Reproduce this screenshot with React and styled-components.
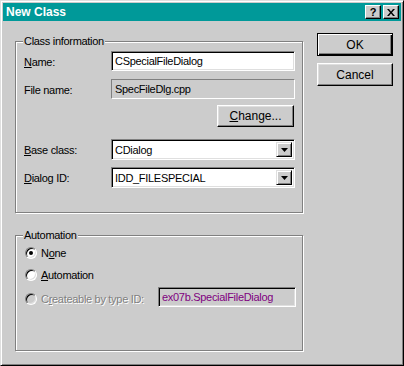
import React from 'react';
import styled, { createGlobalStyle } from 'styled-components';

const Global = createGlobalStyle`
  html, body { margin: 0; padding: 0; background: #cccccc; }
  * { box-sizing: border-box; }
`;

const Window = styled.div`
  width: 404px;
  height: 366px;
  background: #cccccc;
  border: 1px solid;
  border-color: #dfdfdf #000 #000 #dfdfdf;
  box-shadow: inset 1px 1px #fff, inset -1px -1px #808080;
  padding: 2px;
  display: flex;
  flex-direction: column;
  font-family: "Liberation Sans", Arial, sans-serif;
  font-size: 11px;
  letter-spacing: -0.3px;
  color: #000;
`;

const TitleBar = styled.div`
  height: 18px;
  background: #009999;
  display: flex;
  align-items: center;
  padding: 0 2px 0 3px;
`;

const Title = styled.div`
  flex: 1;
  color: #fff;
  font-weight: bold;
  font-size: 12px;
  letter-spacing: 0;
`;

const CapButton = styled.div`
  width: 16px;
  height: 14px;
  margin-left: ${p => p.gap || 0}px;
  background: #cccccc;
  border: 1px solid;
  border-color: #fff #000 #000 #fff;
  box-shadow: inset -1px -1px #808080;
  display: flex;
  align-items: center;
  justify-content: center;
  font-weight: bold;
  font-size: 11px;
  line-height: 1;
`;

const Body = styled.div`
  flex: 1;
  display: flex;
  gap: 14px;
  padding: 12px 8px 0 12px;
`;

const LeftCol = styled.div`
  width: 288px;
  padding-top: 8px;
  display: flex;
  flex-direction: column;
`;

const RightCol = styled.div`
  width: 76px;
  display: flex;
  flex-direction: column;
  gap: 7px;
`;

const Group = styled.div`
  position: relative;
  height: ${p => p.h}px;
  margin-top: ${p => p.mt || 0}px;
  border: 1px solid #808080;
  box-shadow: inset 1px 1px #fff, 1px 1px #fff;
  padding: ${p => p.pad};
  display: flex;
  flex-direction: column;
`;

const Legend = styled.span`
  position: absolute;
  top: -7px;
  left: 7px;
  padding: 0 1px;
  background: #cccccc;
  line-height: 13px;
`;

const FormRow = styled.div`
  display: grid;
  grid-template-columns: 87px 184px;
  align-items: center;
  height: ${p => p.h || 20}px;
  margin-top: ${p => p.mt || 0}px;
`;

const Label = styled.span`
  padding-top: 1px;
`;

const TextBox = styled.div`
  height: 100%;
  display: flex;
  align-items: center;
  padding-left: 3px;
  background: ${p => (p.readOnly ? '#cccccc' : '#fff')};
  border: 1px solid;
  border-color: #808080 #fff #fff #808080;
  box-shadow: ${p => (p.readOnly ? 'none' : 'inset 1px 1px #000, inset -1px -1px #dfdfdf')};
  color: ${p => p.color || '#000'};
  white-space: nowrap;
`;

const Combo = styled.div`
  height: 100%;
  display: flex;
  align-items: stretch;
  background: #fff;
  border: 1px solid;
  border-color: #808080 #fff #fff #808080;
  box-shadow: inset 1px 1px #000, inset -1px -1px #dfdfdf;
  padding: 2px 2px 2px 1px;
`;

const ComboText = styled.span`
  flex: 1;
  display: flex;
  align-items: center;
  padding-left: 2px;
`;

const DropButton = styled.div`
  width: 16px;
  background: #cccccc;
  border: 1px solid;
  border-color: #dfdfdf #000 #000 #dfdfdf;
  box-shadow: inset 1px 1px #fff, inset -1px -1px #808080;
  display: flex;
  align-items: center;
  justify-content: center;
`;

const Button = styled.div`
  width: ${p => p.w || 76}px;
  height: ${p => p.h || 23}px;
  background: #cccccc;
  border: 1px solid;
  border-color: ${p => (p.isDefault ? '#000' : '#fff #000 #000 #fff')};
  box-shadow: ${p =>
    p.isDefault
      ? 'inset 1px 1px #fff, inset -1px -1px #000, inset -2px -2px #808080'
      : 'inset -1px -1px #808080, inset 1px 1px #dfdfdf'};
  display: flex;
  align-items: center;
  justify-content: center;
  font-size: 12px;
  letter-spacing: 0;
`;

const ButtonRow = styled.div`
  display: flex;
  justify-content: flex-end;
  margin-top: ${p => p.mt || 0}px;
  padding-right: 1px;
`;

const RadioRow = styled.div`
  display: flex;
  align-items: center;
  height: 20px;
  margin-top: ${p => p.mt || 0}px;
  gap: 4px;
`;

const Radio = styled.span`
  position: relative;
  width: 12px;
  height: 12px;
  border-radius: 50%;
  border: 1px solid;
  border-color: #808080 #fff #fff #808080;
  box-shadow: inset 1px 1px #000, inset -1px -1px #dfdfdf;
  background: ${p => (p.disabled ? '#cccccc' : '#fff')};
  margin-top: ${p => p.shift || 0}px;

  &::after {
    content: '';
    display: ${p => (p.checked ? 'block' : 'none')};
    position: absolute;
    left: 3px;
    top: 3px;
    width: 4px;
    height: 4px;
    border-radius: 50%;
    background: #000;
  }
`;

const RadioText = styled.span`
  color: ${p => (p.disabled ? '#808080' : '#000')};
  text-shadow: ${p => (p.disabled ? '1px 1px #fff' : 'none')};
  margin-top: ${p => p.shift || 0}px;
`;

const IdField = styled(TextBox)`
  margin-left: auto;
  width: 138px;
  height: 20px;
  box-shadow: inset 1px 1px #000, inset -1px -1px #dfdfdf;
`;

const Arrow = () => (
  <svg width="7" height="4" viewBox="0 0 7 4">
    <polygon points="0,0 7,0 3.5,4" fill="#000" />
  </svg>
);

const CloseGlyph = () => (
  <svg width="8" height="7" viewBox="0 0 8 7">
    <path d="M0 0h2l2 2.5L6 0h2L5 3.5 8 7H6L4 4.5 2 7H0l3-3.5z" fill="#000" />
  </svg>
);

const Key = ({ children }) => <u>{children}</u>;

export default function App() {
  return (
    <>
      <Global />
      <Window>
        <TitleBar>
          <Title>New Class</Title>
          <CapButton>?</CapButton>
          <CapButton gap={2}><CloseGlyph /></CapButton>
        </TitleBar>
        <Body>
          <LeftCol>
            <Group h={172} pad="9px 7px 0 8px">
              <Legend>Class information</Legend>
              <FormRow>
                <Label><Key>N</Key>ame:</Label>
                <TextBox>CSpecialFileDialog</TextBox>
              </FormRow>
              <FormRow mt={8}>
                <Label>File name:</Label>
                <TextBox readOnly>SpecFileDlg.cpp</TextBox>
              </FormRow>
              <ButtonRow mt={6}>
                <Button w={77} h={22}><span><Key>C</Key>hange...</span></Button>
              </ButtonRow>
              <FormRow mt={12} h={21}>
                <Label><Key>B</Key>ase class:</Label>
                <Combo>
                  <ComboText>CDialog</ComboText>
                  <DropButton><Arrow /></DropButton>
                </Combo>
              </FormRow>
              <FormRow mt={7} h={21}>
                <Label><Key>D</Key>ialog ID:</Label>
                <Combo>
                  <ComboText>IDD_FILESPECIAL</ComboText>
                  <DropButton><Arrow /></DropButton>
                </Combo>
              </FormRow>
            </Group>
            <Group h={116} mt={22} pad="7px 6px 0 9px">
              <Legend>Automation</Legend>
              <RadioRow>
                <Radio checked />
                <RadioText>N<Key>o</Key>ne</RadioText>
              </RadioRow>
              <RadioRow mt={2}>
                <Radio />
                <RadioText><Key>A</Key>utomation</RadioText>
              </RadioRow>
              <RadioRow mt={2}>
                <Radio disabled shift={4} />
                <RadioText disabled shift={3}>C<Key>r</Key>eateable by type ID:</RadioText>
                <IdField readOnly color="#800080">ex07b.SpecialFileDialog</IdField>
              </RadioRow>
            </Group>
          </LeftCol>
          <RightCol>
            <Button isDefault>OK</Button>
            <Button>Cancel</Button>
          </RightCol>
        </Body>
      </Window>
    </>
  );
}
